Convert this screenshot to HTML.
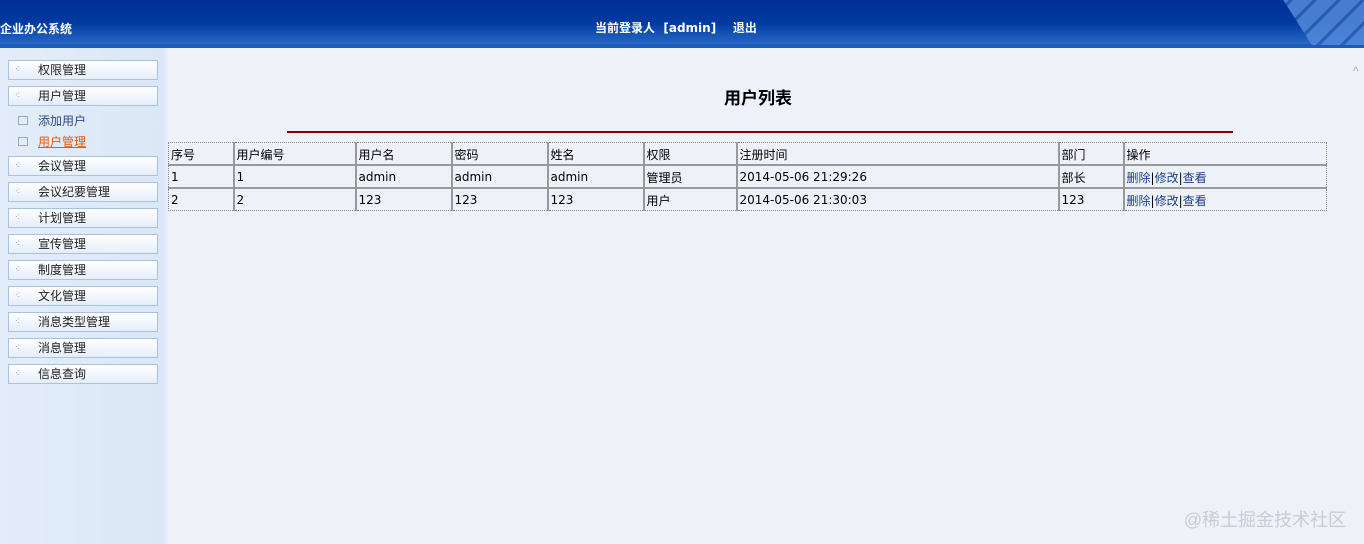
<!DOCTYPE html>
<html><head><meta charset="utf-8"><style>
*{margin:0;padding:0;box-sizing:border-box}
body{width:1364px;height:544px;overflow:hidden;background:#eff1f9;font-family:"Liberation Sans","Noto Sans CJK SC",sans-serif;font-size:12px;position:relative}
.hd{position:absolute;left:0;top:0;width:1364px;height:45px;background:linear-gradient(#002f98 0%,#003a9f 50%,#2a6ac8 100%)}
.hd2{position:absolute;left:0;top:44px;width:1364px;height:4px;background:#1d5cb5}
.kb{position:absolute;right:0;top:0;width:95px;height:45px;background:repeating-linear-gradient(135deg,#4f86d8 0 14px,#2b5fb5 14px 17px);opacity:.9;clip-path:polygon(15% 0,100% 0,100% 100%,45% 100%)}
.t{position:absolute;color:#fff;font-weight:bold;font-size:12px;font-family:"DejaVu Sans","Noto Sans CJK SC",sans-serif}
.sb{position:absolute;left:0;top:48px;width:165px;height:496px;background:linear-gradient(90deg,#e3edf9,#dbe7f6)}
.sbl{position:absolute;left:165px;top:48px;width:3px;height:496px;background:#e8eef8}
.m{position:absolute;left:8px;width:150px;height:20px;border:1px solid #a9c2e2;background:linear-gradient(#fff,#e6eef9);font-size:12px;color:#222;line-height:18px;padding-left:29px}
.m:before{content:"·:";position:absolute;left:6px;top:-1px;color:#6a8bc0;font-size:8px}
.s{position:absolute;left:38px;font-size:12px;color:#2a4b80}
.s:before{content:"";position:absolute;left:-20px;top:4px;width:8px;height:7px;border:1px solid #9ab}
h1{position:absolute;left:724px;top:84px;font-size:17px;font-weight:bold;color:#000}
.ln{position:absolute;left:287px;top:131px;width:946px;height:2px;background:#8b0000}
table{position:absolute;left:168px;top:142px;width:1159px;border-collapse:collapse;border:1px dotted #888}
td{height:23px;font-size:12px;color:#000;padding:2px 2px 0;border-left:2px solid #999;border-top:2px solid #999;vertical-align:middle;font-family:"DejaVu Sans","Noto Sans CJK SC",sans-serif}
tr:first-child td{border-top:none;height:22px}
td:first-child{border-left:none}
a{color:#1a3f8a;text-decoration:none}
.wm{position:absolute;right:18px;top:506px;color:#c8ccd4;font-size:18px}
</style></head><body>
<div class="hd"></div><div class="hd2"></div><div class="kb"></div>
<div class="t" style="left:0;top:20px">企业办公系统</div>
<div class="t" style="left:595px;top:19px">当前登录人&nbsp;&nbsp;[admin]&nbsp;&nbsp;&nbsp;&nbsp;退出</div>
<div class="sb"></div><div class="sbl"></div>
<div class="m" style="top:60px">权限管理</div>
<div class="m" style="top:86px">用户管理</div>
<div class="s" style="top:112px">添加用户</div>
<div class="s" style="top:133px;color:#e8590c;text-decoration:underline">用户管理</div>
<div class="m" style="top:156px">会议管理</div>
<div class="m" style="top:182px">会议纪要管理</div>
<div class="m" style="top:208px">计划管理</div>
<div class="m" style="top:234px">宣传管理</div>
<div class="m" style="top:260px">制度管理</div>
<div class="m" style="top:286px">文化管理</div>
<div class="m" style="top:312px">消息类型管理</div>
<div class="m" style="top:338px">消息管理</div>
<div class="m" style="top:364px">信息查询</div>
<h1>用户列表</h1><div class="ln"></div>
<table>
<colgroup><col style="width:65px"><col style="width:122px"><col style="width:96px"><col style="width:96px"><col style="width:96px"><col style="width:93px"><col style="width:322px"><col style="width:65px"><col></colgroup>
<tr><td>序号</td><td>用户编号</td><td>用户名</td><td>密码</td><td>姓名</td><td>权限</td><td>注册时间</td><td>部门</td><td>操作</td></tr>
<tr><td>1</td><td>1</td><td>admin</td><td>admin</td><td>admin</td><td>管理员</td><td>2014-05-06 21:29:26</td><td>部长</td><td><a>删除</a>|<a>修改</a>|<a>查看</a></td></tr>
<tr><td>2</td><td>2</td><td>123</td><td>123</td><td>123</td><td>用户</td><td>2014-05-06 21:30:03</td><td>123</td><td><a>删除</a>|<a>修改</a>|<a>查看</a></td></tr>
</table>
<div style="position:absolute;left:1353px;top:64px;color:#aaa;font-size:12px">^</div>
<div class="wm">@稀土掘金技术社区</div>
</body></html>
